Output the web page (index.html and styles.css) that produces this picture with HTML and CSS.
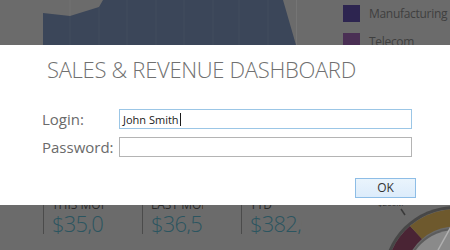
FILE: index.html
```html
<!DOCTYPE html>
<html>
<head>
<meta charset="utf-8">
<link rel="stylesheet" href="styles.css">
</head>
<body>
<div class="dashboard">
  <div class="chart-row">
    <div class="chart-gap"></div>
    <svg class="area-chart" width="254" height="45" viewBox="0 0 254 45">
      <line x1="27" y1="0" x2="27" y2="45" class="grid-light"/>
      <polygon points="0,13 27,16 56,7 60,0 240,0 253,45 0,45" fill="#3b4659"/>
      <g class="grid">
        <line x1="27" y1="16" x2="27" y2="45"/>
        <line x1="56" y1="7" x2="56" y2="45"/>
        <line x1="84" y1="0" x2="84" y2="45"/>
        <line x1="113" y1="0" x2="113" y2="45"/>
        <line x1="141" y1="0" x2="141" y2="45"/>
        <line x1="170" y1="0" x2="170" y2="45"/>
        <line x1="196" y1="0" x2="196" y2="45"/>
        <line x1="225" y1="0" x2="225" y2="45"/>
      </g>
      <line x1="253.5" y1="0" x2="253.5" y2="45" stroke="#757575" stroke-width="1"/>
    </svg>
    <ul class="legend">
      <li><span class="swatch manufacturing"></span><span class="legend-text">Manufacturing</span></li>
      <li><span class="swatch telecom"></span><span class="legend-text">Telecom</span></li>
    </ul>
  </div>
  <div class="middle"></div>
  <div class="kpi-row">
    <div class="kpi">
      <div class="kpi-label">THIS MONTH</div>
      <div class="kpi-value">$35,000</div>
    </div>
    <div class="kpi">
      <div class="kpi-label">LAST MONTH</div>
      <div class="kpi-value">$36,500</div>
    </div>
    <div class="kpi">
      <div class="kpi-label">YTD</div>
      <div class="kpi-value">$382,000</div>
    </div>
    <div class="gauge">
      <span class="gauge-label">$200M</span>
      <svg width="90" height="52" viewBox="0 3 90 52">
        <circle cx="95" cy="83" r="72" fill="#474747"/>
        <circle cx="95" cy="83" r="69" fill="#6a6a6a"/>
        <path d="M 26 83 A 69 69 0 0 1 50 31 L 62 44 A 50 50 0 0 0 45 83 Z" fill="#4a2434"/>
        <path d="M 50 31 A 69 69 0 0 1 164 83 L 145 83 A 50 50 0 0 0 62 44 Z" fill="#6e592d"/>
        <circle cx="95" cy="83" r="50" fill="#5c5c5c"/>
        <circle cx="95" cy="83" r="48" fill="#8a8a8a"/>
        <line x1="41" y1="14" x2="45" y2="20" stroke="#3a3a3a" stroke-width="1.5"/>
        <line x1="78" y1="55" x2="92" y2="30" stroke="#b0b0b0" stroke-width="1.5"/>
      </svg>
    </div>
  </div>
</div>

<div class="modal">
  <h1 class="modal-title">SALES &amp; REVENUE DASHBOARD</h1>
  <form class="login-form">
    <label class="field-label" for="login">Login:</label>
    <div class="input focused" id="login"><span class="input-text">John Smith</span><span class="caret"></span></div>
    <label class="field-label" for="password">Password:</label>
    <div class="input" id="password"></div>
  </form>
  <div class="actions">
    <button class="ok-button" type="button">OK</button>
  </div>
</div>
</body>
</html>
```

FILE: styles.css
```css
html, body {
  margin: 0;
  padding: 0;
}

body {
  width: 450px;
  height: 250px;
  overflow: hidden;
  position: relative;
  background: #6b6b6b;
  font-family: "Open Sans", "Noto Sans", sans-serif;
}

.dashboard {
  display: grid;
  grid-template-rows: 45px 153px 52px;
  height: 250px;
}

.chart-row {
  display: flex;
  align-items: flex-start;
  overflow: hidden;
}

.chart-gap {
  width: 43px;
  flex: none;
}

.area-chart {
  display: block;
  flex: none;
}

.grid line {
  stroke: #434d5f;
  stroke-width: 1;
}

.grid-light {
  stroke: #737373;
  stroke-width: 1;
}

.legend {
  list-style: none;
  margin: 0;
  padding: 5px 0 0 46px;
  display: flex;
  flex-direction: column;
  gap: 11px;
}

.legend li {
  display: flex;
  align-items: center;
  gap: 9px;
  height: 17px;
}

.legend-text {
  font-size: 12px;
  letter-spacing: -0.3px;
  color: #3f3f3f;
  white-space: nowrap;
}

.swatch {
  width: 17px;
  height: 17px;
  flex: none;
}

.swatch.manufacturing { background: #2d2550; }
.swatch.telecom { background: #4a2f54; }

.kpi-row {
  display: flex;
  padding-left: 43px;
}

.kpi {
  width: 90px;
  height: 36px;
  border-left: 1px solid #4b4b4b;
  padding-left: 8px;
  overflow: hidden;
  flex: none;
}

.kpi-label {
  font-size: 12px;
  line-height: 14px;
  color: #2b2b2b;
  width: 52px;
  overflow: hidden;
  white-space: nowrap;
}

.kpi-value {
  font-size: 22px;
  font-weight: 300;
  line-height: 22px;
  color: #2b5560;
  width: 52px;
  overflow: hidden;
  white-space: nowrap;
  letter-spacing: -0.8px;
}

.gauge {
  margin-left: auto;
  position: relative;
  width: 90px;
  height: 52px;
}

.gauge svg {
  display: block;
}

.gauge-label {
  position: absolute;
  left: 18px;
  top: 0;
  font-size: 8px;
  line-height: 10px;
  color: #2b2b2b;
}

.modal {
  position: absolute;
  left: 0;
  top: 45px;
  width: 450px;
  height: 160px;
  background: #ffffff;
  box-sizing: border-box;
  padding: 9px 34px 0 42px;
}

.modal-title {
  margin: 0 0 0 5px;
  font-size: 22px;
  font-weight: 300;
  color: #707070;
  line-height: 30px;
  letter-spacing: -0.3px;
}

.login-form {
  display: grid;
  grid-template-columns: 77px 293px;
  row-gap: 8px;
  margin-top: 25px;
  align-items: center;
}

.field-label {
  font-size: 15px;
  color: #6a6a6a;
  line-height: 20px;
}

.input {
  height: 20px;
  box-sizing: border-box;
  border: 1px solid #b4b4b4;
  display: flex;
  align-items: center;
  padding-left: 3px;
}

.input.focused {
  border-color: #9bc6e6;
}

.input-text {
  font-family: "Open Sans", "Noto Sans", sans-serif;
  font-size: 11px;
  color: #1a1a1a;
}

.caret {
  width: 1px;
  height: 13px;
  background: #1a1a1a;
  margin-left: 1px;
}

.actions {
  display: flex;
  justify-content: flex-end;
  margin-top: 21px;
}

.ok-button {
  width: 61px;
  height: 20px;
  box-sizing: border-box;
  border: 1px solid #8dbde6;
  background: linear-gradient(#eaf4fc, #dcecfb);
  font-family: "Open Sans", "Noto Sans", sans-serif;
  font-size: 12px;
  color: #333;
  padding: 0;
  line-height: 18px;
}
```
